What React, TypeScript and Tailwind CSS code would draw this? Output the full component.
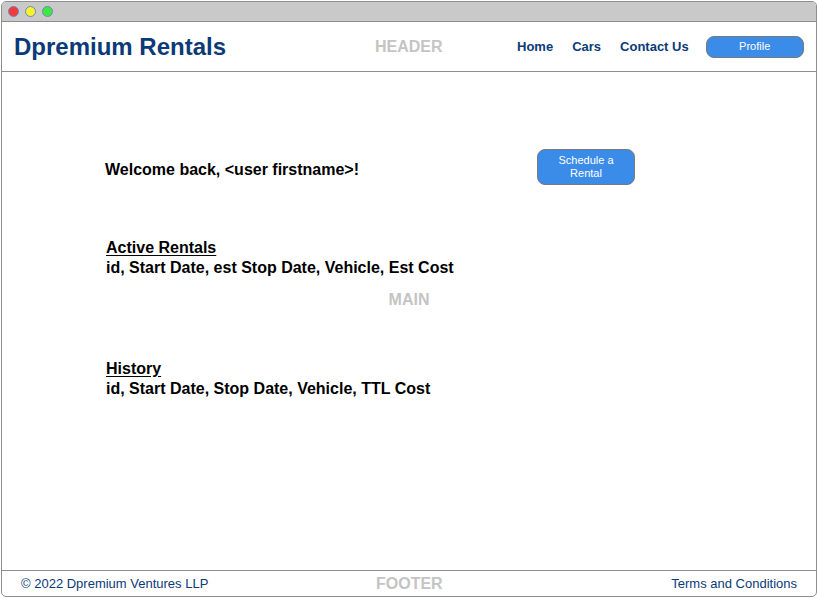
import React from "react";

const Dashboard: React.FC = () => {
  return (
    <div
      className="w-[818px] h-[598px] bg-white pl-px pt-px"
      style={{ fontFamily: '"Liberation Sans", Arial, sans-serif' }}
    >
      <div className="w-[816px] h-[596px] flex flex-col border border-[#8e8e8e] rounded-[5px] overflow-hidden">
        {/* window title bar */}
        <div className="h-[20px] shrink-0 bg-[#c9c9c9] border-b border-[#8e8e8e] flex items-center gap-[6px] pl-[6px]">
          <span className="w-[11px] h-[11px] rounded-full bg-[#f23a3a] border border-[#6d86c4]" />
          <span className="w-[11px] h-[11px] rounded-full bg-[#f5f22e] border border-[#6d86c4]" />
          <span className="w-[11px] h-[11px] rounded-full bg-[#3ee83e] border border-[#6d86c4]" />
        </div>

        {/* header */}
        <header className="h-[50px] shrink-0 border-b border-[#8e8e8e] flex items-center pl-[12px] pr-[12px]">
          <h1 className="text-[24px] font-bold text-[#0b3a78] w-[361px]">Dpremium Rentals</h1>
          <span className="text-[16px] font-bold text-[#c4c4c4] w-[142px]">HEADER</span>
          <nav className="flex items-center text-[13px] font-bold text-[#0b3a78]">
            <a className="mr-[19px]">Home</a>
            <a className="mr-[19px]">Cars</a>
            <a className="mr-[17px]">Contact Us</a>
            <button className="w-[98px] h-[22px] rounded-[8px] bg-[#3b8be9] border border-[#7a7a7a] text-white text-[11px] font-normal">
              Profile
            </button>
          </nav>
        </header>

        {/* main */}
        <main className="flex-1 flex flex-col pl-[103px] text-black">
          <div className="flex items-start mt-[77px]">
            <p className="text-[16px] font-bold leading-[20px] w-[432px] mt-[11px]">
              Welcome back, &lt;user firstname&gt;!
            </p>
            <button className="w-[98px] h-[36px] rounded-[8px] bg-[#3b8be9] border border-[#7a7a7a] text-white text-[11px] leading-[13px]">
              Schedule a<br />Rental
            </button>
          </div>

          <div className="mt-[53px] text-[16px] font-bold leading-[20px] pl-px">
            <h2 className="underline underline-offset-2">Active Rentals</h2>
            <p>id, Start Date, est Stop Date, Vehicle, Est Cost</p>
          </div>

          <p className="mt-[13px] ml-[-103px] text-center text-[16px] leading-[18px] font-bold text-[#c4c4c4]">MAIN</p>

          <div className="mt-[50px] text-[16px] font-bold leading-[20px] pl-px">
            <h2 className="underline underline-offset-2">History</h2>
            <p>id, Start Date, Stop Date, Vehicle, TTL Cost</p>
          </div>
        </main>

        {/* footer */}
        <footer className="h-[26px] shrink-0 border-t border-[#8e8e8e] flex items-center px-[19px] text-[13px] text-[#0b3a78]">
          <span className="w-[355px]">© 2022 Dpremium Ventures LLP</span>
          <span className="text-[16px] font-bold text-[#c4c4c4]">FOOTER</span>
          <span className="ml-auto">Terms and Conditions</span>
        </footer>
      </div>
    </div>
  );
};

export default Dashboard;
